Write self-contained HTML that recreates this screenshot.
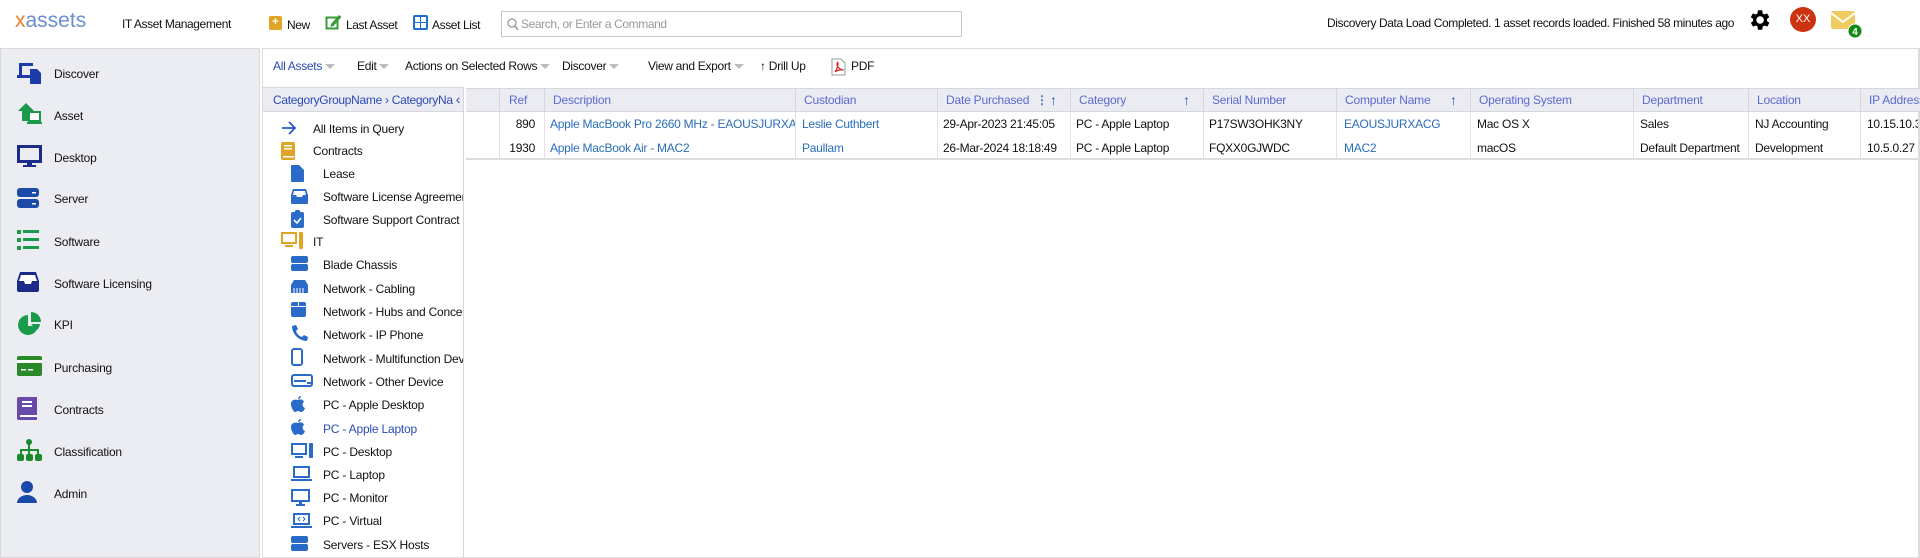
<!DOCTYPE html>
<html><head><meta charset="utf-8"><style>
*{box-sizing:border-box;margin:0;padding:0}
body{width:1920px;height:558px;overflow:hidden;background:#fff;font-family:"Liberation Sans",Arial,sans-serif;font-size:12px;color:#111;position:relative}
.a{position:absolute;white-space:nowrap}
.hd{font-size:12px;letter-spacing:-0.4px}
.side{position:absolute;left:0;top:48px;width:260px;height:510px;background:#ecedf3;border:1px solid #d8d8dc}
.si{position:absolute;left:54px;font-size:12px;letter-spacing:-0.2px}
.ic{position:absolute}
.tb{font-size:12px;letter-spacing:-0.3px;top:59px}
.dd{display:inline-block;width:0;height:0;border-left:5px solid transparent;border-right:5px solid transparent;border-top:5px solid #bbb;margin-left:3px;vertical-align:middle}
.ti{position:absolute;font-size:12px;letter-spacing:-0.2px;width:140px;overflow:hidden;white-space:nowrap}
.gh{position:absolute;top:88px;height:24px;background:#ebecf2;border-right:1px solid #d6d6dc;border-bottom:1px solid #d6d6dc;border-top:1px solid #d6d6dc;color:#5a6ad6;font-size:12px;line-height:22px;padding-left:8px;white-space:nowrap;overflow:hidden;letter-spacing:-0.2px}
.gc{position:absolute;height:24px;line-height:24px;font-size:12px;padding-left:8px;white-space:nowrap;overflow:hidden;border-right:1px solid #e2e2e6;letter-spacing:-0.25px}
.lk{color:#2a6ebb}
</style></head><body>
<!-- header -->
<div class="a" style="left:15px;top:9px;font-size:21px;color:#6a8fd0;letter-spacing:0px"><span style="color:#e8822a">x</span>assets</div>
<div class="a hd" style="left:122px;top:17px">IT Asset Management</div>
<div class="ic" style="left:269px;top:16px;width:13px;height:14px;background:#e0a526;border-radius:2px;color:#fff;font-size:11px;line-height:13px;text-align:center;font-weight:bold">+</div>
<div class="a hd" style="left:287px;top:18px">New</div>
<svg class="ic" style="left:325px;top:13px" width="18" height="18" viewBox="0 0 18 18"><rect x="1.5" y="4.5" width="11" height="11" fill="none" stroke="#3a9a3a" stroke-width="2"/><path d="M6 11 L14 2 L16.5 4 L8.5 13 L5.5 14Z" fill="#3a9a3a"/></svg>
<div class="a hd" style="left:346px;top:18px">Last Asset</div>
<svg class="ic" style="left:413px;top:15px" width="15" height="15" viewBox="0 0 15 15"><rect width="15" height="15" rx="2" fill="#1e6fd0"/><rect x="2" y="2" width="5" height="5" fill="#fff"/><rect x="8" y="2" width="5" height="5" fill="#fff"/><rect x="2" y="8" width="5" height="5" fill="#fff"/><rect x="8" y="8" width="5" height="5" fill="#fff"/></svg>
<div class="a hd" style="left:432px;top:18px">Asset List</div>
<div class="a" style="left:501px;top:11px;width:461px;height:26px;border:1px solid #c8c8c8"></div>
<svg class="ic" style="left:507px;top:18px" width="12" height="13" viewBox="0 0 12 13"><circle cx="5" cy="5" r="4" fill="none" stroke="#999" stroke-width="1.3"/><path d="M8 8 L11 12" stroke="#999" stroke-width="1.5"/></svg>
<div class="a hd" style="left:521px;top:17px;color:#999">Search, or Enter a Command</div>
<div class="a hd" style="left:1327px;top:16px;font-size:12px">Discovery Data Load Completed. 1 asset records loaded. Finished 58 minutes ago</div>
<svg class="ic" style="left:1746px;top:7px" width="26" height="26" viewBox="0 0 24 24"><path fill="#000" d="M19.4 13a7.5 7.5 0 0 0 0-2l2.1-1.6-2-3.5-2.5 1a7.4 7.4 0 0 0-1.7-1L15 3h-4l-.4 2.9a7.4 7.4 0 0 0-1.7 1l-2.5-1-2 3.5L6.6 11a7.5 7.5 0 0 0 0 2l-2.1 1.6 2 3.5 2.5-1a7.4 7.4 0 0 0 1.7 1L11 21h4l.4-2.9a7.4 7.4 0 0 0 1.7-1l2.5 1 2-3.5zM13 15.5a3.5 3.5 0 1 1 0-7 3.5 3.5 0 0 1 0 7z"/></svg>
<div class="ic" style="left:1790px;top:7px;width:26px;height:25px;border-radius:50%;background:#cc3311;color:#fff;font-size:11px;line-height:25px;text-align:center">XX</div>
<svg class="ic" style="left:1830px;top:10px" width="34" height="30" viewBox="0 0 34 30"><rect x="1" y="1" width="24" height="18" rx="2" fill="#f0cc60"/><path d="M1 3 L13 12 L25 3" fill="none" stroke="#fff" stroke-width="1.8"/><circle cx="25" cy="21" r="7" fill="#128a12" stroke="#fff" stroke-width="1"/><text x="25" y="25" font-size="10" font-family="Liberation Sans" fill="#fff" text-anchor="middle" font-weight="bold">4</text></svg>

<!-- sidebar -->
<div class="side"></div>
<svg class="ic" style="left:17px;top:61px" width="26" height="24" viewBox="0 0 26 24"><path d="M2 2h14v3H5v9H2z M0 14h13v3H0z" fill="#1c3aa8"/><path d="M13 8h7l4 4v11H13z" fill="#1c3aa8"/></svg>
<div class="si" style="top:67px">Discover</div>
<svg class="ic" style="left:17px;top:102px" width="28" height="24" viewBox="0 0 28 24"><path d="M1 9 L9 1 L17 9 H13 V19 H5 V9Z" fill="#1a9a4a"/><rect x="12" y="10" width="11" height="9" fill="#fff" stroke="#1a9a4a" stroke-width="2"/><rect x="10" y="20" width="15" height="2" fill="#1a9a4a"/></svg>
<div class="si" style="top:109px">Asset</div>
<svg class="ic" style="left:17px;top:145px" width="25" height="24" viewBox="0 0 25 24"><rect x="1.5" y="1.5" width="22" height="15" fill="none" stroke="#1c2a8a" stroke-width="3"/><rect x="10" y="17" width="5" height="3" fill="#1c2a8a"/><rect x="6" y="20" width="13" height="2" fill="#1c2a8a"/></svg>
<div class="si" style="top:151px">Desktop</div>
<svg class="ic" style="left:17px;top:188px" width="22" height="20" viewBox="0 0 22 20"><rect y="0" width="22" height="9" rx="3" fill="#1c4aa8"/><rect y="11" width="22" height="9" rx="3" fill="#1c4aa8"/><rect x="15" y="4" width="4" height="1.5" fill="#fff"/><rect x="15" y="15" width="4" height="1.5" fill="#fff"/></svg>
<div class="si" style="top:192px">Server</div>
<svg class="ic" style="left:17px;top:230px" width="22" height="20" viewBox="0 0 22 20"><g fill="#1a9a4a"><rect y="0" width="4" height="4"/><rect x="6" y="0" width="16" height="3"/><rect y="8" width="4" height="4"/><rect x="6" y="8" width="16" height="3"/><rect y="16" width="4" height="4"/><rect x="6" y="16" width="16" height="3"/></g></svg>
<div class="si" style="top:235px">Software</div>
<svg class="ic" style="left:17px;top:271px" width="22" height="21" viewBox="0 0 22 21"><path d="M3 1h16l3 9v9a2 2 0 0 1-2 2H2a2 2 0 0 1-2-2v-9z" fill="#1c2a8a"/><path d="M4 4h14l2 6h-5l-1 3H8l-1-3H2z" fill="#fff"/></svg>
<div class="si" style="top:277px">Software Licensing</div>
<svg class="ic" style="left:18px;top:312px" width="24" height="24" viewBox="0 0 24 24"><path d="M10 3a10 10 0 1 0 10 11H10z" fill="#1a9a4a"/><path d="M13 0v10h10A10 10 0 0 0 13 0z" fill="#1a9a4a"/><path d="M13 12h9a10 10 0 0 1-3 6z" fill="#1a9a4a"/></svg>
<div class="si" style="top:318px">KPI</div>
<svg class="ic" style="left:17px;top:356px" width="25" height="20" viewBox="0 0 25 20"><rect width="25" height="20" rx="2" fill="#2a8a2a"/><rect y="4" width="25" height="3" fill="#fff"/><rect x="4" y="13" width="5" height="1.5" fill="#fff"/><rect x="11" y="13" width="5" height="1.5" fill="#fff"/></svg>
<div class="si" style="top:361px">Purchasing</div>
<svg class="ic" style="left:17px;top:397px" width="20" height="23" viewBox="0 0 20 23"><path d="M2 0h18v23H2a2 2 0 0 1-2-2V2a2 2 0 0 1 2-2z" fill="#6a4aa8"/><rect x="3" y="18" width="17" height="2" fill="#fff"/><rect x="5" y="4" width="10" height="2" fill="#fff"/><rect x="5" y="8" width="10" height="2" fill="#fff"/></svg>
<div class="si" style="top:403px">Contracts</div>
<svg class="ic" style="left:17px;top:439px" width="25" height="22" viewBox="0 0 25 22"><g fill="#1a8a2a"><rect x="9" y="0" width="6" height="6" rx="3"/><rect x="11" y="5" width="2" height="6"/><rect x="3" y="10" width="19" height="2"/><rect x="3" y="10" width="2" height="5"/><rect x="20" y="10" width="2" height="5"/><rect x="11" y="10" width="2" height="5"/><rect x="0" y="15" width="7" height="7" rx="2"/><rect x="9" y="15" width="7" height="7" rx="2"/><rect x="18" y="15" width="7" height="7" rx="2"/></g></svg>
<div class="si" style="top:445px">Classification</div>
<svg class="ic" style="left:17px;top:481px" width="20" height="22" viewBox="0 0 20 22"><circle cx="10" cy="6" r="6" fill="#1a4aa8"/><path d="M0 22a10 8 0 0 1 20 0z" fill="#1a4aa8"/></svg>
<div class="si" style="top:487px">Admin</div>

<!-- main panel -->
<div class="a" style="left:262px;top:48px;width:1658px;height:510px;border:1px solid #dcdcdc;border-right:2px solid #dcdcdc"></div>
<div class="a tb" style="left:273px;color:#2a4ab8">All Assets<span class="dd"></span></div>
<div class="a tb" style="left:357px">Edit<span class="dd"></span></div>
<div class="a tb" style="left:405px">Actions on Selected Rows<span class="dd"></span></div>
<div class="a tb" style="left:562px">Discover<span class="dd"></span></div>
<div class="a tb" style="left:648px">View and Export<span class="dd"></span></div>
<div class="a tb" style="left:760px">&#8593; Drill Up</div>
<svg class="ic" style="left:831px;top:58px" width="15" height="18" viewBox="0 0 15 18"><path d="M1 1h9l4 4v12H1z" fill="#fff" stroke="#999"/><path d="M4 14c2-3 3-7 3-9s-1 0-1 2 4 5 6 5-5-1-8 2z" fill="none" stroke="#d22" stroke-width="1.2"/></svg>
<div class="a tb" style="left:851px">PDF</div>

<!-- tree -->
<div class="a" style="left:262px;top:87px;width:202px;height:471px;border-right:1px solid #d6d6dc;border-top:1px solid #d6d6dc"></div>
<div class="a" style="left:263px;top:88px;width:200px;height:24px;background:#ebecf2;border-bottom:1px solid #d6d6dc;color:#2a4ab8;font-size:12px;line-height:23px;padding-left:10px;overflow:hidden;letter-spacing:-0.3px">CategoryGroupName &#8250; CategoryNa <span style="font-size:14px">&#8249;</span></div>
<svg class="ic" style="left:281px;top:121px" width="16" height="14" viewBox="0 0 16 14"><path d="M1 7h13M8 1l6 6-6 6" fill="none" stroke="#2a5ac8" stroke-width="1.8"/></svg>
<div class="ti" style="left:313px;top:122px;width:150px">All Items in Query</div>
<svg class="ic" style="left:281px;top:142px" width="14" height="18" viewBox="0 0 14 18"><rect width="14" height="18" rx="2" fill="#e0a526"/><rect x="3" y="3" width="8" height="1.5" fill="#fff"/><rect x="3" y="6" width="8" height="1.5" fill="#fff"/><rect x="2" y="14" width="11" height="1.5" fill="#fff"/></svg>
<div class="ti" style="left:313px;top:144px;width:150px">Contracts</div>
<svg class="ic" style="left:291px;top:165px" width="13" height="17" viewBox="0 0 13 17"><path d="M1 0h7l5 5v11a1 1 0 0 1-1 1H1a1 1 0 0 1-1-1V1a1 1 0 0 1 1-1z" fill="#2a6ac8"/></svg>
<div class="ti" style="left:323px;top:167px">Lease</div>
<svg class="ic" style="left:291px;top:189px" width="17" height="15" viewBox="0 0 17 15"><path d="M2 0h13l2 6v8a1 1 0 0 1-1 1H1a1 1 0 0 1-1-1V6z" fill="#2a6ac8"/><path d="M3 2h11l1 4h-3l-1 2H6L5 6H2z" fill="#fff"/></svg>
<div class="ti" style="left:323px;top:190px">Software License Agreement</div>
<svg class="ic" style="left:291px;top:210px" width="13" height="18" viewBox="0 0 13 18"><rect y="2" width="13" height="16" rx="2" fill="#2a6ac8"/><rect x="4" y="0" width="5" height="4" rx="1" fill="#2a6ac8"/><path d="M3 10l3 3 4-5" fill="none" stroke="#fff" stroke-width="1.6"/></svg>
<div class="ti" style="left:323px;top:213px">Software Support Contract</div>
<svg class="ic" style="left:281px;top:232px" width="22" height="17" viewBox="0 0 22 17"><rect x="1" y="1" width="14" height="10" fill="none" stroke="#e0a526" stroke-width="2"/><rect x="4" y="13" width="8" height="2" fill="#e0a526"/><rect x="18" y="0" width="4" height="17" rx="1" fill="#e0a526"/></svg>
<div class="ti" style="left:313px;top:235px;width:150px">IT</div>
<svg class="ic" style="left:291px;top:256px" width="17" height="15" viewBox="0 0 17 15"><rect width="17" height="7" rx="2" fill="#2a6ac8"/><rect y="8" width="17" height="7" rx="2" fill="#2a6ac8"/></svg>
<div class="ti" style="left:323px;top:258px">Blade Chassis</div>
<svg class="ic" style="left:291px;top:280px" width="17" height="13" viewBox="0 0 17 13"><path d="M3 0h11l3 5v8H0V5z" fill="#2a6ac8"/><path d="M3 8v5M6 8v5M9 8v5M12 8v5" stroke="#fff"/></svg>
<div class="ti" style="left:323px;top:282px">Network - Cabling</div>
<svg class="ic" style="left:291px;top:302px" width="15" height="15" viewBox="0 0 15 15"><rect width="15" height="15" rx="2" fill="#2a6ac8"/><rect x="7" y="0" width="1" height="4" fill="#fff"/><rect y="4" width="15" height="1" fill="#fff"/></svg>
<div class="ti" style="left:323px;top:305px">Network - Hubs and Concentrators</div>
<svg class="ic" style="left:291px;top:325px" width="17" height="17" viewBox="0 0 17 17"><path d="M1 1l4-1 2 4-2 2c1 3 3 5 6 6l2-2 4 2-1 4C8 16 1 9 1 1z" fill="#2a6ac8"/></svg>
<div class="ti" style="left:323px;top:328px">Network - IP Phone</div>
<svg class="ic" style="left:291px;top:348px" width="12" height="18" viewBox="0 0 12 18"><rect x="1" y="1" width="10" height="16" rx="2" fill="none" stroke="#2a6ac8" stroke-width="2"/></svg>
<div class="ti" style="left:323px;top:352px">Network - Multifunction Device</div>
<svg class="ic" style="left:291px;top:374px" width="22" height="13" viewBox="0 0 22 13"><rect x="1" y="1" width="20" height="11" rx="2" fill="none" stroke="#2a6ac8" stroke-width="2"/><rect x="3" y="6" width="12" height="2" fill="#2a6ac8"/><rect x="16" y="8" width="4" height="2" fill="#2a6ac8"/></svg>
<div class="ti" style="left:323px;top:375px">Network - Other Device</div>
<svg class="ic" style="left:291px;top:396px" width="14" height="16" viewBox="0 0 14 16"><path d="M7 4c2-1 5-1 6 2-2 1-2 5 1 6-1 3-3 4-4 4s-2-1-3-1-2 1-3 1-4-4-4-8 4-5 7-4zM7 3c0-2 2-3 3-3 0 2-2 3-3 3z" fill="#2a6ac8"/></svg>
<div class="ti" style="left:323px;top:398px">PC - Apple Desktop</div>
<svg class="ic" style="left:291px;top:419px" width="14" height="16" viewBox="0 0 14 16"><path d="M7 4c2-1 5-1 6 2-2 1-2 5 1 6-1 3-3 4-4 4s-2-1-3-1-2 1-3 1-4-4-4-8 4-5 7-4zM7 3c0-2 2-3 3-3 0 2-2 3-3 3z" fill="#2a6ac8"/></svg>
<div class="ti" style="left:323px;top:422px;color:#2a4ab8">PC - Apple Laptop</div>
<svg class="ic" style="left:291px;top:443px" width="22" height="15" viewBox="0 0 22 15"><rect x="1" y="1" width="14" height="10" fill="none" stroke="#2a6ac8" stroke-width="2"/><rect x="4" y="13" width="8" height="2" fill="#2a6ac8"/><rect x="18" y="0" width="4" height="15" rx="1" fill="#2a6ac8"/></svg>
<div class="ti" style="left:323px;top:445px">PC - Desktop</div>
<svg class="ic" style="left:291px;top:466px" width="21" height="15" viewBox="0 0 21 15"><rect x="3" y="1" width="15" height="10" fill="none" stroke="#2a6ac8" stroke-width="2"/><rect y="13" width="21" height="2" fill="#2a6ac8"/></svg>
<div class="ti" style="left:323px;top:468px">PC - Laptop</div>
<svg class="ic" style="left:291px;top:489px" width="19" height="17" viewBox="0 0 19 17"><rect x="1" y="1" width="17" height="11" fill="none" stroke="#2a6ac8" stroke-width="2"/><rect x="8" y="12" width="3" height="3" fill="#2a6ac8"/><rect x="5" y="15" width="9" height="2" fill="#2a6ac8"/></svg>
<div class="ti" style="left:323px;top:491px">PC - Monitor</div>
<svg class="ic" style="left:291px;top:513px" width="21" height="15" viewBox="0 0 21 15"><rect x="3" y="1" width="15" height="10" fill="none" stroke="#2a6ac8" stroke-width="2"/><rect y="13" width="21" height="2" fill="#2a6ac8"/><path d="M9 4l-2 2 2 2M12 4l2 2-2 2" fill="none" stroke="#2a6ac8"/></svg>
<div class="ti" style="left:323px;top:514px">PC - Virtual</div>
<svg class="ic" style="left:291px;top:536px" width="17" height="15" viewBox="0 0 17 15"><rect width="17" height="7" rx="2" fill="#2a6ac8"/><rect y="8" width="17" height="7" rx="2" fill="#2a6ac8"/></svg>
<div class="ti" style="left:323px;top:538px">Servers - ESX Hosts</div>

<!-- grid -->
<div class="a" style="left:466px;top:88px;width:1452px;height:72px;border-bottom:2px solid #dcdcdc"></div>
<div class="gh" style="left:466px;width:34px"></div>
<div class="gh" style="left:500px;width:45px;padding-left:9px">Ref</div>
<div class="gh" style="left:545px;width:251px">Description</div>
<div class="gh" style="left:796px;width:142px">Custodian</div>
<div class="gh" style="left:938px;width:133px">Date Purchased <span style="position:absolute;left:98px;font-weight:bold">&#8942;</span><span style="position:absolute;left:112px;color:#2a5ac8;font-weight:bold;font-size:14px">&#8593;</span></div>
<div class="gh" style="left:1071px;width:133px">Category<span style="position:absolute;left:112px;color:#2a5ac8;font-weight:bold;font-size:14px">&#8593;</span></div>
<div class="gh" style="left:1204px;width:133px">Serial Number</div>
<div class="gh" style="left:1337px;width:134px">Computer Name<span style="position:absolute;left:113px;color:#2a5ac8;font-weight:bold;font-size:14px">&#8593;</span></div>
<div class="gh" style="left:1471px;width:163px">Operating System</div>
<div class="gh" style="left:1634px;width:115px">Department</div>
<div class="gh" style="left:1749px;width:112px">Location</div>
<div class="gh" style="left:1861px;width:59px;border-right:none">IP Address</div>

<div class="gc" style="left:466px;top:112px;width:34px"></div>
<div class="gc" style="left:500px;top:112px;width:45px;text-align:right;padding-right:9px">890</div>
<div class="gc lk" style="left:545px;top:112px;width:251px;padding-left:5px">Apple MacBook Pro 2660 MHz - EAOUSJURXACG</div>
<div class="gc lk" style="left:796px;top:112px;width:142px;padding-left:6px">Leslie Cuthbert</div>
<div class="gc" style="left:938px;top:112px;width:133px;padding-left:5px">29-Apr-2023 21:45:05</div>
<div class="gc" style="left:1071px;top:112px;width:133px;padding-left:5px">PC - Apple Laptop</div>
<div class="gc" style="left:1204px;top:112px;width:133px;padding-left:5px">P17SW3OHK3NY</div>
<div class="gc lk" style="left:1337px;top:112px;width:134px;padding-left:7px">EAOUSJURXACG</div>
<div class="gc" style="left:1471px;top:112px;width:163px;padding-left:6px">Mac OS X</div>
<div class="gc" style="left:1634px;top:112px;width:115px;padding-left:6px">Sales</div>
<div class="gc" style="left:1749px;top:112px;width:112px;padding-left:6px">NJ Accounting</div>
<div class="gc" style="left:1861px;top:112px;width:57px;padding-left:6px;border-right:none">10.15.10.3</div>

<div class="gc" style="left:466px;top:136px;width:34px"></div>
<div class="gc" style="left:500px;top:136px;width:45px;text-align:right;padding-right:9px">1930</div>
<div class="gc lk" style="left:545px;top:136px;width:251px;padding-left:5px">Apple MacBook Air - MAC2</div>
<div class="gc lk" style="left:796px;top:136px;width:142px;padding-left:6px">Paullam</div>
<div class="gc" style="left:938px;top:136px;width:133px;padding-left:5px">26-Mar-2024 18:18:49</div>
<div class="gc" style="left:1071px;top:136px;width:133px;padding-left:5px">PC - Apple Laptop</div>
<div class="gc" style="left:1204px;top:136px;width:133px;padding-left:5px">FQXX0GJWDC</div>
<div class="gc lk" style="left:1337px;top:136px;width:134px;padding-left:7px">MAC2</div>
<div class="gc" style="left:1471px;top:136px;width:163px;padding-left:6px">macOS</div>
<div class="gc" style="left:1634px;top:136px;width:115px;padding-left:6px">Default Department</div>
<div class="gc" style="left:1749px;top:136px;width:112px;padding-left:6px">Development</div>
<div class="gc" style="left:1861px;top:136px;width:57px;padding-left:6px;border-right:none">10.5.0.27</div>
</body></html>
